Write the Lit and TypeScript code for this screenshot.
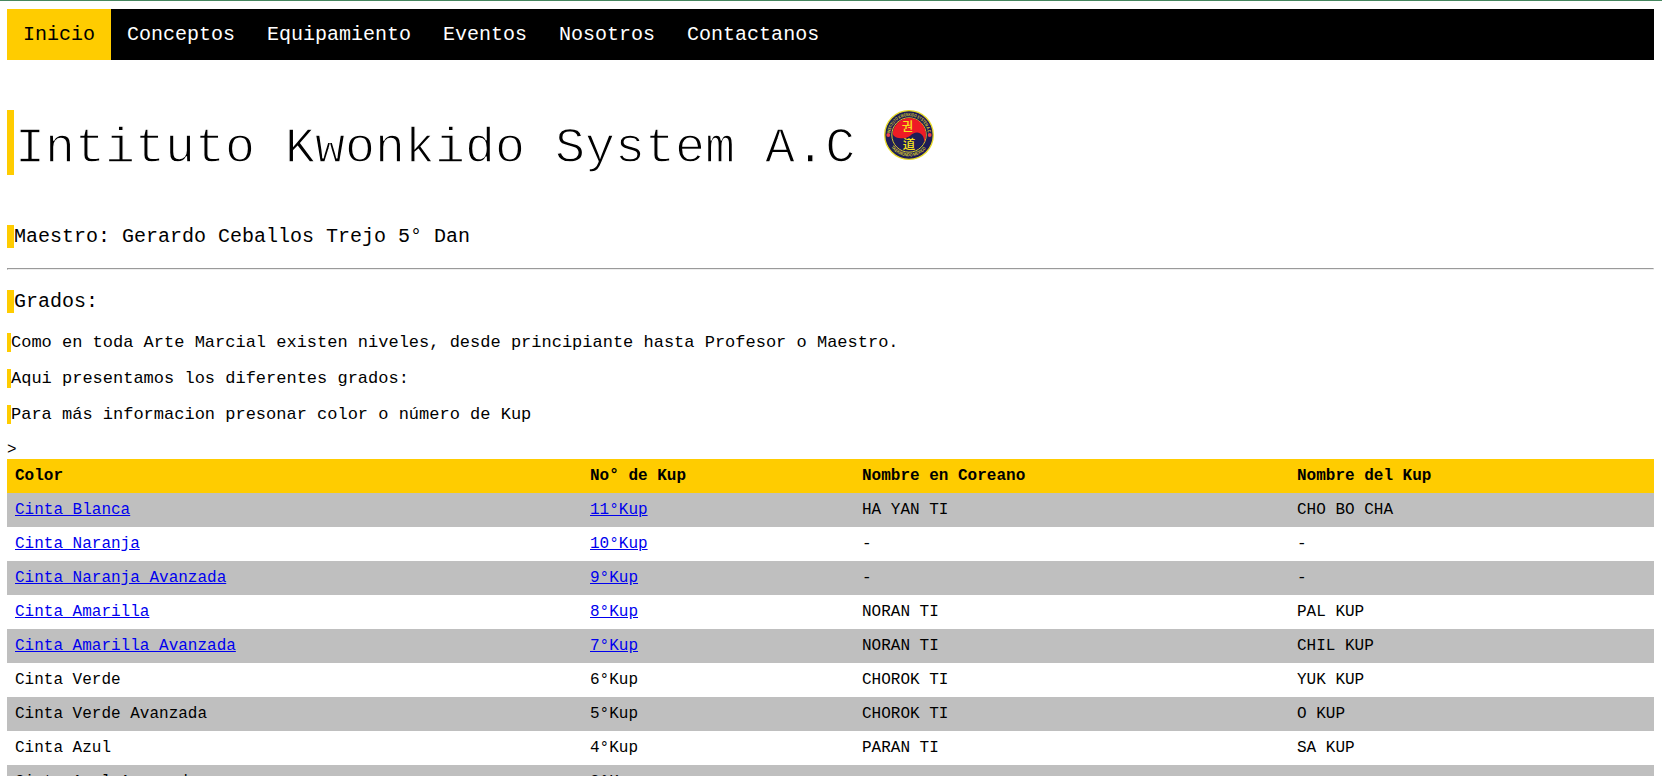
import { LitElement, html, css } from "lit";
import { customElement } from "lit/decorators.js";

interface Grade {
  color: string;
  kup: string;
  korean: string;
  name: string;
  linked?: boolean;
}

const SECTIONS = ["Inicio", "Conceptos", "Equipamiento", "Eventos", "Nosotros", "Contactanos"];

const GRADES: Grade[] = [
  { color: "Cinta Blanca", kup: "11°Kup", korean: "HA YAN TI", name: "CHO BO CHA", linked: true },
  { color: "Cinta Naranja", kup: "10°Kup", korean: "-", name: "-", linked: true },
  { color: "Cinta Naranja Avanzada", kup: "9°Kup", korean: "-", name: "-", linked: true },
  { color: "Cinta Amarilla", kup: "8°Kup", korean: "NORAN TI", name: "PAL KUP", linked: true },
  { color: "Cinta Amarilla Avanzada", kup: "7°Kup", korean: "NORAN TI", name: "CHIL KUP", linked: true },
  { color: "Cinta Verde", kup: "6°Kup", korean: "CHOROK TI", name: "YUK KUP" },
  { color: "Cinta Verde Avanzada", kup: "5°Kup", korean: "CHOROK TI", name: "O KUP" },
  { color: "Cinta Azul", kup: "4°Kup", korean: "PARAN TI", name: "SA KUP" },
  { color: "Cinta Azul Avanzada", kup: "3°Kup", korean: "", name: "" },
];

@customElement("school-emblem")
class SchoolEmblem extends LitElement {
  static styles = css`
    :host { display: block; width: 50px; height: 50px; }
    .emblem { display: block; width: 50px; height: 50px; }
    .ring { font: 700 4.6px "Liberation Sans", sans-serif; fill: #d8c92c; }
    .hanja { font: 500 12.5px "Noto Sans CJK KR", sans-serif; fill: #f7e41c; text-anchor: middle; }
  `;

  render() {
    return html`
      <svg class="emblem" viewBox="0 0 50 50" aria-hidden="true">
        <defs>
          <path id="upper" d="M6.2 25a18.8 18.8 0 0 1 37.6 0" />
          <path id="lower" d="M3.6 29.5a22 22 0 0 0 42.8 0" />
        </defs>
        <circle cx="25" cy="25" r="24.3" fill="#1e1d56" stroke="#e8dc28" stroke-width="1.3" />
        <circle cx="25" cy="25" r="17.2" fill="#1e1d56" stroke="#e8dc28" stroke-width="0.9" />
        <path fill="#ee1c25" d="M8.7 23.5A16.6 16.6 0 1 1 39.5 33.2C41.5 28.5 38 22.5 33 22.6C27 22.8 26.5 28.2 19 28.3C13.5 28.4 9.5 27 8.7 23.5Z" />
        <text class="ring"><textPath href="#upper" startOffset="2" textLength="55" lengthAdjust="spacingAndGlyphs">INSTITUTO KWONKIDO SYSTEM A.C.</textPath></text>
        <text class="ring"><textPath href="#lower" startOffset="8.5" textLength="40" lengthAdjust="spacingAndGlyphs">TAEKWONDO MEXICO</textPath></text>
        <circle cx="4.3" cy="25" r="1.9" fill="#ee4048" />
        <circle cx="45.7" cy="25" r="1.9" fill="#ee4048" />
        <text class="hanja" x="23.5" y="21">권</text>
        <text class="hanja" x="25" y="39">道</text>
      </svg>
    `;
  }
}

@customElement("app-root")
class AppRoot extends LitElement {
  static styles = css`
    :host {
      display: block;
      height: 776px;
      overflow: hidden;
      box-sizing: border-box;
      border-top: 1px solid #46875f;
      padding: 8px 8px 0 7px;
      background: #fff;
      color: #000;
      font: 16px/18px "Courier New", "Liberation Mono", monospace;
    }
    .nav { display: flex; background: #000; font-size: 20px; line-height: 23px; }
    .nav-link { padding: 14px 16px; color: #fff; text-decoration: none; }
    .nav-link.active { background: #fc0; color: #000; }
    .title {
      display: flex;
      align-items: flex-start;
      gap: 29px;
      height: 65px;
      margin: 50px 0;
      border-left: 7px solid #fc0;
      font-size: 50px;
      font-weight: 400;
      line-height: 57px;
    }
    .title-text { padding: 10px 0 0 1px; white-space: pre; -webkit-text-stroke: 1.3px #fff; }
    .subtitle { margin: 0; border-left: 7px solid #fc0; font-size: 20px; font-weight: 400; line-height: 23px; }
    .rule { height: 0; margin: 20px 0; border: 1px solid; border-color: #9a9a9a #eee #eee #9a9a9a; }
    .note { margin: 0 0 17px; border-left: 4px solid #fc0; font-size: 17px; line-height: 19px; }
    .grados { margin-bottom: 20px; }
    .stray { height: 18px; }
    .grades { width: 100%; border-collapse: collapse; table-layout: fixed; }
    .w-color { width: 575px; }
    .w-kup { width: 272px; }
    .w-korean { width: 435px; }
    .cell { padding: 8px; text-align: left; }
    .head { background: #fc0; }
    .row:nth-child(odd) { background: #bfbfbf; }
    .link { color: #00e; text-decoration: underline; }
  `;

  private label(text: string, linked?: boolean) {
    return linked ? html`<a class="link" href="#">${text}</a>` : text;
  }

  render() {
    return html`
      <nav class="nav">
        ${SECTIONS.map((s, i) => html`<a class="nav-link ${i === 0 ? "active" : ""}" href="#">${s}</a>`)}
      </nav>
      <h1 class="title"><span class="title-text">Intituto Kwonkido System A.C</span><school-emblem></school-emblem></h1>
      <h2 class="subtitle">Maestro: Gerardo Ceballos Trejo 5° Dan</h2>
      <hr class="rule" />
      <h2 class="subtitle grados">Grados:</h2>
      <p class="note">Como en toda Arte Marcial existen niveles, desde principiante hasta Profesor o Maestro.</p>
      <p class="note">Aqui presentamos los diferentes grados:</p>
      <p class="note">Para más informacion presonar color o número de Kup</p>
      <div class="stray">&gt;</div>
      <table class="grades">
        <colgroup><col class="w-color" /><col class="w-kup" /><col class="w-korean" /><col /></colgroup>
        <thead>
          <tr class="head">
            ${["Color", "No° de Kup", "Nombre en Coreano", "Nombre del Kup"].map((h) => html`<th class="cell">${h}</th>`)}
          </tr>
        </thead>
        <tbody>
          ${GRADES.map((g) => html`
            <tr class="row">
              <td class="cell">${this.label(g.color, g.linked)}</td>
              <td class="cell">${this.label(g.kup, g.linked)}</td>
              <td class="cell">${g.korean}</td>
              <td class="cell">${g.name}</td>
            </tr>`)}
        </tbody>
      </table>
    `;
  }
}
